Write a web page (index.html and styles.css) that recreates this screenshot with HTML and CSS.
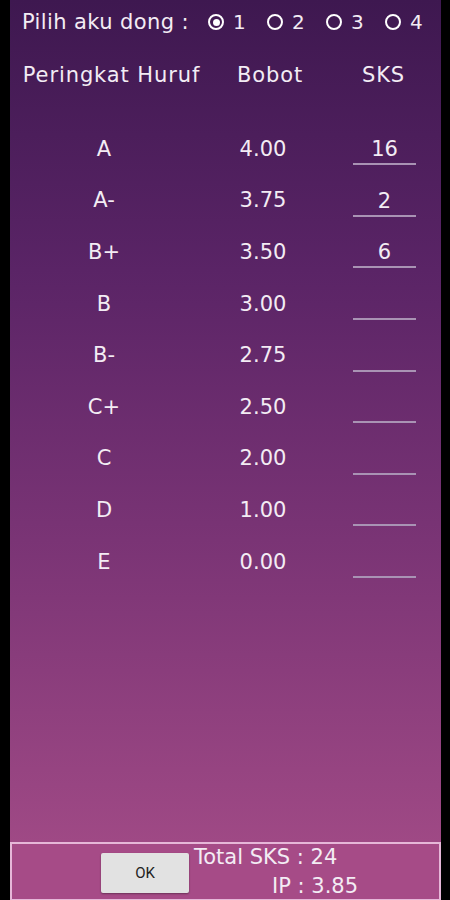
FILE: index.html
```html
<!DOCTYPE html>
<html>
<head>
<meta charset="utf-8">
<link rel="stylesheet" href="styles.css">
</head>
<body>
<div class="app">
  <div class="main">
    <div class="topbar">
      <span class="prompt">Pilih aku dong :</span>
      <div class="radios">
        <label class="radio"><span class="dot checked"></span><span class="num">1</span></label>
        <label class="radio"><span class="dot"></span><span class="num">2</span></label>
        <label class="radio"><span class="dot"></span><span class="num">3</span></label>
        <label class="radio"><span class="dot"></span><span class="num">4</span></label>
      </div>
    </div>
    <div class="head">
      <div class="cell">Peringkat Huruf</div>
      <div class="cell">Bobot</div>
      <div class="cell">SKS</div>
    </div>
    <div class="rows">
      <div class="cell">A</div><div class="cell">4.00</div><div class="cell"><div class="input">16</div></div>
      <div class="cell">A-</div><div class="cell">3.75</div><div class="cell"><div class="input">2</div></div>
      <div class="cell">B+</div><div class="cell">3.50</div><div class="cell"><div class="input">6</div></div>
      <div class="cell">B</div><div class="cell">3.00</div><div class="cell"><div class="input"></div></div>
      <div class="cell">B-</div><div class="cell">2.75</div><div class="cell"><div class="input"></div></div>
      <div class="cell">C+</div><div class="cell">2.50</div><div class="cell"><div class="input"></div></div>
      <div class="cell">C</div><div class="cell">2.00</div><div class="cell"><div class="input"></div></div>
      <div class="cell">D</div><div class="cell">1.00</div><div class="cell"><div class="input"></div></div>
      <div class="cell">E</div><div class="cell">0.00</div><div class="cell"><div class="input"></div></div>
    </div>
  </div>
  <div class="footer">
    <button class="ok">OK</button>
    <div class="totals">
      <div class="line1">Total SKS : 24</div>
      <div class="line2">IP : 3.85</div>
    </div>
  </div>
</div>
</body>
</html>
```
FILE: styles.css
```css
html, body {
  margin: 0;
  padding: 0;
  background: #000;
}
body {
  width: 450px;
  height: 900px;
  overflow: hidden;
  font-family: "DejaVu Sans", sans-serif;
  font-size: 21px;
  color: #f3ecf4;
}
.app {
  margin: 0 9px 0 10px;
  height: 900px;
  display: flex;
  flex-direction: column;
  background: linear-gradient(to bottom, #3e1850 0%, #5a2466 30%, #7a3475 60%, #a64d88 100%);
}
.main {
  flex: 1;
}
.topbar {
  height: 44px;
  display: flex;
  align-items: center;
  padding-left: 12px;
  white-space: nowrap;
}
.prompt {
  flex-shrink: 0;
  margin-right: 19px;
  letter-spacing: 0.4px;
}
.radios {
  display: flex;
  flex-shrink: 0;
}
.radio {
  display: flex;
  align-items: center;
  gap: 9px;
  width: 59px;
}
.radio:last-child {
  width: auto;
}
.dot {
  width: 16px;
  height: 16px;
  box-sizing: border-box;
  border: 2.5px solid #fff;
  border-radius: 50%;
  display: flex;
  align-items: center;
  justify-content: center;
}
.dot.checked::after {
  content: "";
  width: 7px;
  height: 7px;
  border-radius: 50%;
  background: #fff;
}
.num {
  font-size: 20px;
}
.head {
  display: grid;
  grid-template-columns: 203px 114px 113px;
  margin-top: 9px;
  height: 44px;
  letter-spacing: 0.9px;
}
.rows {
  display: grid;
  grid-template-columns: 188px 130px 113px;
  margin-top: 26px;
  grid-auto-rows: 51.6px;
}
.cell {
  display: flex;
  align-items: center;
  justify-content: center;
}
.input {
  width: 63px;
  height: 28px;
  line-height: 28px;
  text-align: center;
  border-bottom: 2px solid #a993b4;
  margin-top: 3px;
}
.footer {
  height: 58px;
  box-sizing: border-box;
  border: 2px solid #e6b7d8;
  border-bottom-width: 1px;
  background: #a64b87;
  display: flex;
  align-items: flex-start;
  padding-left: 89px;
  padding-top: 8px;
}
.ok {
  width: 88px;
  height: 40px;
  border: none;
  border-radius: 2px;
  background: #e2e2e2;
  box-shadow: 0 1px 2px rgba(0,0,0,0.35);
  font-family: "Roboto", sans-serif;
  font-size: 15px;
  color: #222;
  margin-top: 1px;
}
.totals {
  margin-left: 5px;
  margin-top: -9px;
  line-height: 29px;
}
.line2 {
  padding-left: 78px;
}
```
